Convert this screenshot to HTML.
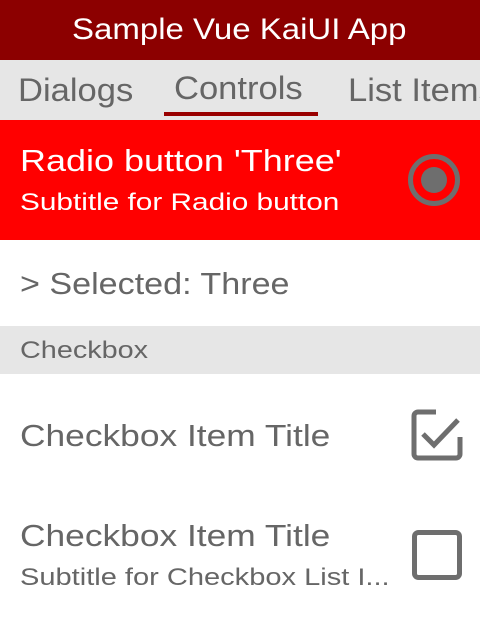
<html><head><style>
body{margin:0;width:480px;height:640px;overflow:hidden;background:#fff;font-family:"Liberation Sans",sans-serif;}
.abs{position:absolute;white-space:nowrap;transform-origin:0 0}
</style></head><body>
<div class="abs" style="left:0;top:0;width:480px;height:60px;background:#8c0000"></div>
<div class="abs" style="left:72px;top:13px;color:#fff;font-size:30px;transform:scaleX(1.1)">Sample Vue KaiUI App</div>
<div class="abs" style="left:0;top:60px;width:480px;height:60px;background:#e6e6e6"></div>
<div class="abs" style="left:18px;top:72px;color:#666;font-size:32px;transform:scaleX(1.08)">Dialogs</div>
<div class="abs" style="left:174px;top:70px;color:#666;font-size:32px;transform:scaleX(1.08)">Controls</div>
<div class="abs" style="left:348px;top:72px;color:#666;font-size:32px;transform:scaleX(1.08)">List Items</div>
<div class="abs" style="left:164px;top:112px;width:154px;height:4px;background:#900"></div>
<div class="abs" style="left:0;top:120px;width:480px;height:120px;background:#f00"></div>
<div class="abs" style="left:20px;top:143px;color:#fff;font-size:31px;transform:scaleX(1.16)">Radio button 'Three'</div>
<div class="abs" style="left:20px;top:189px;color:#fff;font-size:24px;transform:scaleX(1.24)">Subtitle for Radio button</div>
<svg class="abs" style="left:400px;top:146px" width="68" height="68"><circle cx="34" cy="34" r="23.5" fill="none" stroke="#6e6e6e" stroke-width="5"/><circle cx="34" cy="34" r="13" fill="#6e6e6e"/></svg>
<div class="abs" style="left:20px;top:266px;color:#666;font-size:31px;transform:scaleX(1.1)">&gt; Selected: Three</div>
<div class="abs" style="left:0;top:326px;width:480px;height:48px;background:#e6e6e6"></div>
<div class="abs" style="left:20px;top:337px;color:#666;font-size:24px;transform:scaleX(1.2)">Checkbox</div>
<div class="abs" style="left:20px;top:418px;color:#666;font-size:31px;transform:scaleX(1.14)">Checkbox Item Title</div>
<svg class="abs" style="left:410px;top:408px" width="54" height="54"><path d="M26 4H8a4 4 0 0 0-4 4v38a4 4 0 0 0 4 4h38a4 4 0 0 0 4-4V29" fill="none" stroke="#6e6e6e" stroke-width="5"/><path d="M13 26l11 11 24-25" fill="none" stroke="#6e6e6e" stroke-width="5"/></svg>
<div class="abs" style="left:20px;top:518px;color:#666;font-size:31px;transform:scaleX(1.14)">Checkbox Item Title</div>
<div class="abs" style="left:20px;top:564px;color:#666;font-size:24px;transform:scaleX(1.21)">Subtitle for Checkbox List I...</div>
<svg class="abs" style="left:410px;top:528px" width="54" height="54"><rect x="4.5" y="4.5" width="45" height="45" rx="4" fill="none" stroke="#6e6e6e" stroke-width="5"/></svg>
</body></html>
